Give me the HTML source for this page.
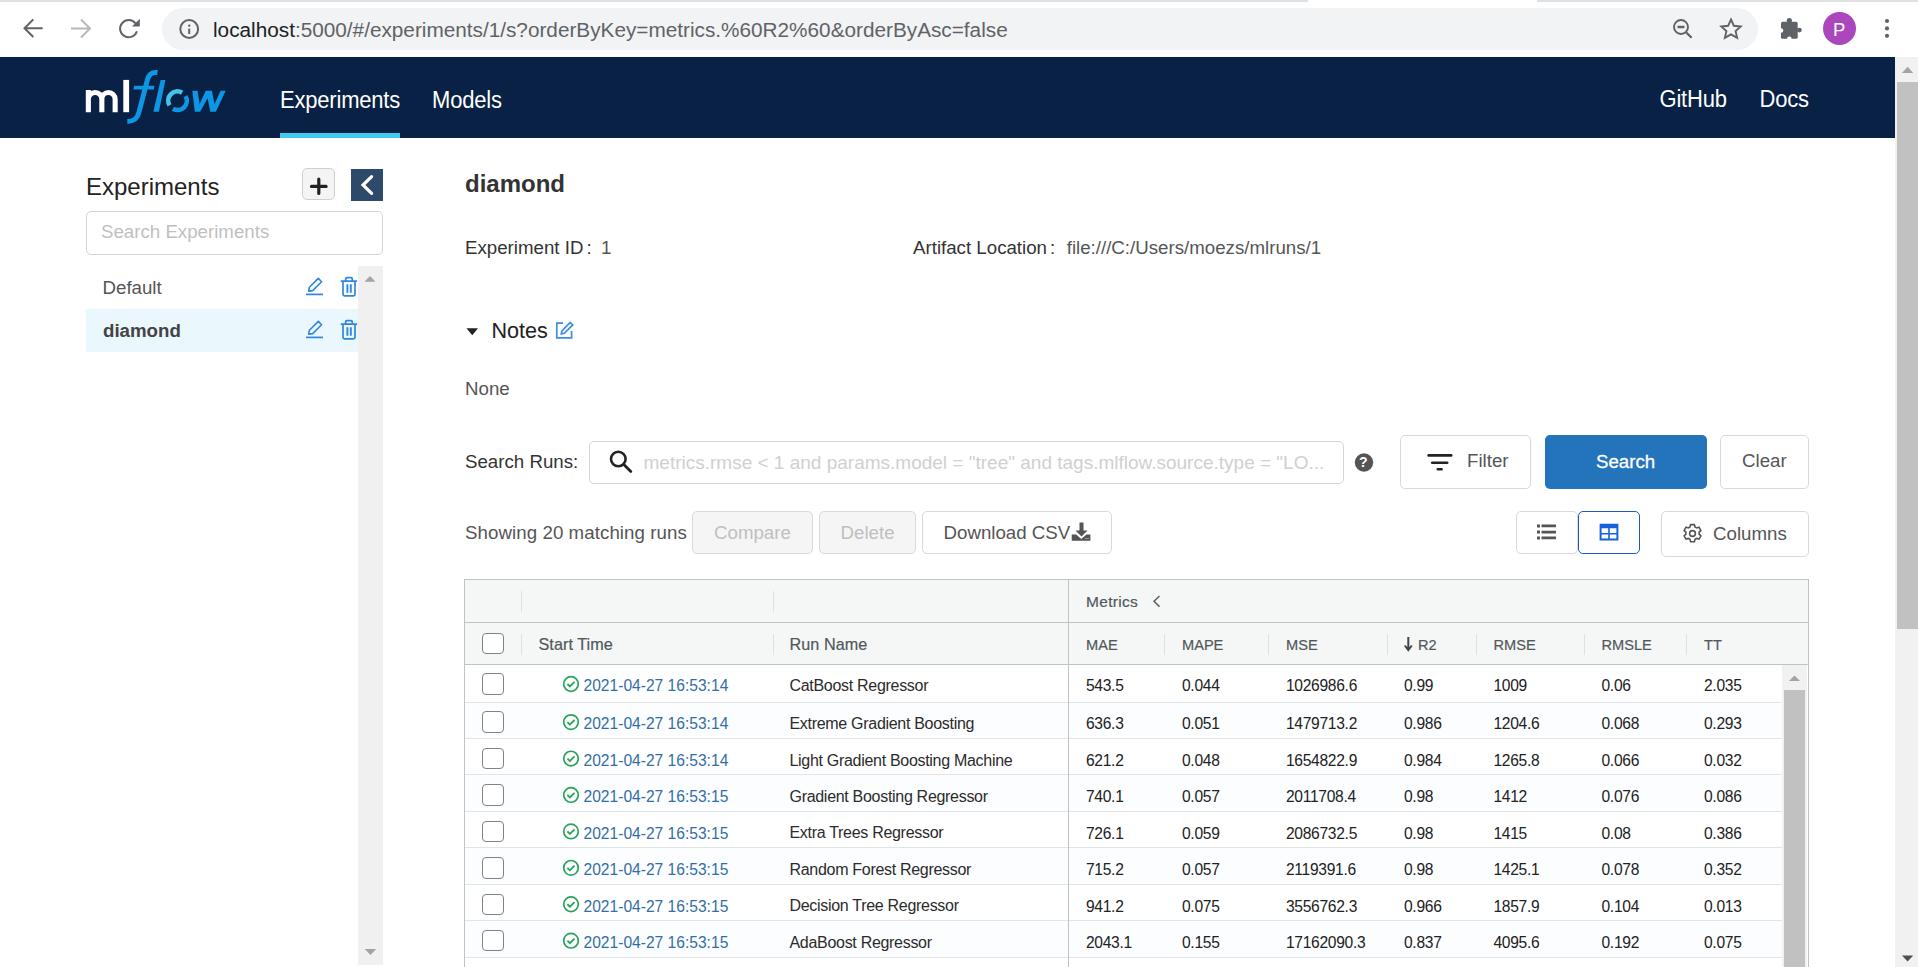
<!DOCTYPE html>
<html><head><meta charset="utf-8">
<style>
*{box-sizing:border-box;margin:0;padding:0}
html,body{width:1918px;height:967px;overflow:hidden;background:#fff;font-family:"Liberation Sans",sans-serif}
.a{position:absolute}
.t{position:absolute;white-space:pre;line-height:1}
svg{position:absolute;overflow:visible}
/* chrome */
#topstrip{left:0;top:0;width:1918px;height:2px;background:#dee1e6}
#omni{left:162px;top:8px;width:1596px;height:42px;border-radius:21px;background:#f1f3f4}
#nav{left:0;top:57px;width:1895px;height:81px;background:#082144}
.btn{position:absolute;border:1px solid #d9d9d9;border-radius:5px;background:#fff}
.gsep{position:absolute;width:1px;background:#dde2e6}
</style></head><body>
<div id="topstrip" class="a"></div>
<div class="a" style="left:1308px;top:0;width:229px;height:2px;background:#fff"></div>
<div id="omni" class="a"></div>

<!-- back -->
<svg style="left:0;top:0" width="1" height="1">
 <g fill="none" stroke="#5f6368" stroke-width="2">
  <path d="M42.6 28.2H25 M33.3 19.4l-8.8 8.8 8.8 8.8"/>
 </g>
 <g fill="none" stroke="#b6b8bb" stroke-width="2">
  <path d="M71 28.5h18 M81 19.5l9 9-9 9"/>
 </g>
 <path d="M136.9 31.2A8.6 8.6 0 1 1 135.5 23.4" fill="none" stroke="#5f6368" stroke-width="2"/>
 <path d="M139.8 18.8v7.8h-7.8z" fill="#5f6368"/>
 <circle cx="189.2" cy="29" r="8.9" fill="none" stroke="#5f6368" stroke-width="2"/>
 <rect x="188.2" y="28.6" width="2" height="5.4" fill="#5f6368"/>
 <circle cx="189.2" cy="25.6" r="1.2" fill="#5f6368"/>
 <!-- zoom -->
 <circle cx="1681" cy="27" r="7" fill="none" stroke="#5f6368" stroke-width="1.9"/>
 <path d="M1677.5 27h7 M1686 32.2l5.6 5.6" stroke="#5f6368" stroke-width="2.3" fill="none"/>
 <!-- star -->
 <path d="M1731 19.5l2.9 6.3 6.8.7-5.1 4.6 1.5 6.8-6.1-3.5-6.1 3.5 1.5-6.8-5.1-4.6 6.8-.7z" fill="none" stroke="#5f6368" stroke-width="1.9" stroke-linejoin="miter"/>
 <!-- puzzle -->
 <rect x="1781" y="21.8" width="16.7" height="17" rx="1.6" fill="#5f6368"/>
 <circle cx="1789.35" cy="20.5" r="2.6" fill="#5f6368"/>
 <circle cx="1799.4" cy="30.1" r="2.4" fill="#5f6368"/>
 <circle cx="1781" cy="30.5" r="2.3" fill="#fff"/>
 <circle cx="1789.35" cy="38.9" r="2.3" fill="#fff"/>
 <circle cx="1839.5" cy="28.4" r="16.5" fill="#ab47bc"/>
 <circle cx="1887" cy="21" r="2.1" fill="#5f6368"/>
 <circle cx="1887" cy="28.4" r="2.1" fill="#5f6368"/>
 <circle cx="1887" cy="35.8" r="2.1" fill="#5f6368"/>
</svg>
<div class="t" style="left:1833px;top:20.5px;font-size:18.5px;color:#fff">P</div>
<div class="t" style="left:213px;top:19.7px;font-size:20.75px;color:#5f6368"><span style="color:#202124">localhost</span>:5000/#/experiments/1/s?orderByKey=metrics.%60R2%60&amp;orderByAsc=false</div>

<!-- navbar -->
<div id="nav" class="a"></div>
<div class="a" style="left:280px;top:133px;width:120px;height:4.5px;background:#43c9ed"></div>
<div class="t" style="left:280px;top:88.6px;font-size:22px;letter-spacing:-.2px;color:#fff;transform:scaleY(1.07);transform-origin:0 0">Experiments</div>
<div class="t" style="left:432px;top:88.6px;font-size:22px;letter-spacing:-.2px;color:#fff;transform:scaleY(1.07);transform-origin:0 0">Models</div>
<div class="t" style="left:1659.5px;top:88.3px;font-size:22px;letter-spacing:-.2px;color:#fff;transform:scaleY(1.07);transform-origin:0 0">GitHub</div>
<div class="t" style="left:1759.5px;top:88.3px;font-size:22px;letter-spacing:-.2px;color:#fff;transform:scaleY(1.07);transform-origin:0 0">Docs</div>
<!-- logo -->
<svg style="left:0;top:0" width="1" height="1">
 <g fill="none" stroke="#fff" stroke-width="5.1">
  <path d="M88.35 112.2V90 M88.35 99.2a6.75 6.75 0 0 1 13.5 0V112.2 M101.85 99.2a6.65 6.65 0 0 1 13.3 0V112.2"/>
 </g>
 <rect x="123.3" y="79.9" width="5.8" height="32.3" fill="#fff"/>
 <path d="M157.5 72.6C151.5 71.8 148.6 74.5 147.2 80.5L139.2 111.5C137.6 118.5 134 121.3 127.3 121.6" fill="none" stroke="#0d96e4" stroke-width="5"/>
 <path d="M134.1 85.8h20.4l-.7 3.7h-20.4z" fill="#0d96e4"/>
 <path d="M160.6 79.9h4.8l-6.5 31.9h-5.5z" fill="#0d96e4"/>
 <path d="M169.5 105.3A9.2 9.2 0 0 1 182.1 92.7" fill="none" stroke="#45c2ea" stroke-width="4.6"/>
 <path d="M185.5 96.1A9.2 9.2 0 0 1 172.9 108.7" fill="none" stroke="#0d96e4" stroke-width="4.6"/>
 <path d="M192.3 90.8L197.6 90.8L199.6 104L205.7 90.8L211.9 90.8L214.5 104L220.6 90.8L225.7 90.8L215.9 111.7L210.3 111.7L207.6 98.3L200.1 111.7L194.8 111.7z" fill="#0d96e4"/>
</svg>

<!-- page scrollbar -->
<div class="a" style="left:1895px;top:57px;width:23px;height:910px;background:#f1f1f1"></div>
<div class="a" style="left:1897px;top:82px;width:21px;height:547px;background:#c1c1c1"></div>
<svg style="left:0;top:0" width="1" height="1">
 <path d="M1902 73h11.2l-5.6-6.3z" fill="#a3a3a3"/>
 <path d="M1902 955.5h11.2l-5.6 6z" fill="#505050"/>
</svg>

<!-- SIDEBAR -->
<div class="t" style="left:86px;top:175px;font-size:24px;color:#222">Experiments</div>
<div class="a" style="left:302px;top:168px;width:33px;height:32px;border:1px solid #cfcfcf;border-radius:5px;background:#f4f4f4"></div>
<svg style="left:0;top:0" width="1" height="1"><path d="M318.8 179.2v14.2 M311.5 186.4h14.6" stroke="#222" stroke-width="3.2" stroke-linecap="round"/></svg>
<div class="a" style="left:351px;top:169px;width:32px;height:32px;background:#2e4a6b"></div>
<svg style="left:0;top:0" width="1" height="1"><path d="M371.6 176.6l-8.6 8.4 8.6 8.4" stroke="#fff" stroke-width="3.2" fill="none" stroke-linecap="round"/></svg>
<div class="a" style="left:86px;top:211px;width:297px;height:44px;border:1px solid #d4d4d4;border-radius:5px"></div>
<div class="t" style="left:101px;top:223px;font-size:18.7px;color:#bfbfbf">Search Experiments</div>
<div class="a" style="left:86px;top:309px;width:272px;height:43px;background:#eaf7fd"></div>
<div class="a" style="left:358px;top:266px;width:25px;height:699px;background:#f0f0f0"></div>
<svg style="left:0;top:0" width="1" height="1">
 <path d="M364.5 281.8h11l-5.5-5.8z" fill="#a3a3a3"/>
 <path d="M364.8 949h11.4l-5.7 6z" fill="#a3a3a3"/>
</svg>
<div class="t" style="left:102.5px;top:278.8px;font-size:18.7px;color:#555">Default</div>
<div class="t" style="left:103px;top:321.8px;font-size:18.7px;color:#444;font-weight:bold">diamond</div>
<svg style="left:0;top:0" width="1" height="1">
 <g fill="none" stroke="#2f86e0" stroke-width="1.7">
  <path d="M306 294.4h17"/>
  <path d="M308.6 291.1l.8-3.8 8.9-8.9 3.3 3.3-8.9 8.9z" stroke-width="1.6" stroke-linejoin="round"/>
  <path d="M340.7 281.2h16.4 M345.6 280.8v-1.9a1.3 1.3 0 0 1 1.3-1.3h4.1a1.3 1.3 0 0 1 1.3 1.3v1.9 M343 281.5v12.7a1.6 1.6 0 0 0 1.6 1.6h8.8a1.6 1.6 0 0 0 1.6-1.6v-12.7"/>
  <path d="M347.4 284.3v8.4 M350.8 284.3v8.4" stroke-width="1.9"/>
 </g>
 <g fill="none" stroke="#2f86e0" stroke-width="1.7">
  <path d="M306 337.4h17"/>
  <path d="M308.6 334.1l.8-3.8 8.9-8.9 3.3 3.3-8.9 8.9z" stroke-width="1.6" stroke-linejoin="round"/>
  <path d="M340.7 324.2h16.4 M345.6 323.8v-1.9a1.3 1.3 0 0 1 1.3-1.3h4.1a1.3 1.3 0 0 1 1.3 1.3v1.9 M343 324.5v12.7a1.6 1.6 0 0 0 1.6 1.6h8.8a1.6 1.6 0 0 0 1.6-1.6v-12.7"/>
  <path d="M347.4 327.3v8.4 M350.8 327.3v8.4" stroke-width="1.9"/>
 </g>
</svg>

<!-- MAIN -->
<div class="t" style="left:465px;top:172px;font-size:24px;color:#333;font-weight:bold">diamond</div>
<div class="t" style="left:465px;top:238.8px;font-size:18.7px;color:#333">Experiment ID<span style="margin:0 9.5px 0 3px">:</span><span style="color:#555">1</span></div>
<div class="t" style="left:913px;top:238.8px;font-size:18.7px;color:#333">Artifact Location<span style="margin:0 11.5px 0 3px">:</span><span style="color:#555">file:///C:/Users/moezs/mlruns/1</span></div>
<svg style="left:0;top:0" width="1" height="1"><path d="M466.5 328.2h11.5l-5.75 7z" fill="#222"/></svg>
<div class="t" style="left:491.5px;top:319.5px;font-size:21.6px;color:#222">Notes</div>
<svg style="left:0;top:0" width="1" height="1"><g fill="none" stroke="#3a8ee6" stroke-width="1.7"><path d="M563 323.2h-6.2v14.6h14.8v-6.8 M570.3 322.5l2.4 2.4-8.4 8.4-3 .6.6-3z"/></g></svg>
<div class="t" style="left:465px;top:379.5px;font-size:18.7px;color:#555">None</div>

<div class="t" style="left:465px;top:453px;font-size:18.7px;color:#333">Search Runs:</div>
<div class="a" style="left:589px;top:441px;width:755px;height:43px;border:1px solid #d4d4d4;border-radius:5px"></div>
<svg style="left:0;top:0" width="1" height="1"><circle cx="618.3" cy="459" r="7.3" fill="none" stroke="#222" stroke-width="2.6"/><path d="M623.8 464.5l7 7" stroke="#222" stroke-width="2.8" stroke-linecap="round"/></svg>
<div class="t" style="left:643.5px;top:452.5px;font-size:19px;color:#d0d0d0">metrics.rmse &lt; 1 and params.model = "tree" and tags.mlflow.source.type = "LO...</div>
<svg style="left:0;top:0" width="1" height="1"><circle cx="1364" cy="462.5" r="9.2" fill="#555"/></svg>
<div class="t" style="left:1359px;top:455px;font-size:14px;color:#fff;font-weight:bold">?</div>
<div class="btn" style="left:1400px;top:435px;width:131px;height:54px"></div>
<svg style="left:0;top:0" width="1" height="1"><path d="M1428.6 455.4h22.6 M1432.2 462.7h15 M1437.8 469.2h3.8" stroke="#222" stroke-width="2.6" stroke-linecap="round"/></svg>
<div class="t" style="left:1467px;top:452.3px;font-size:18.7px;color:#555">Filter</div>
<div class="a" style="left:1545px;top:435px;width:162px;height:54px;background:#2374bb;border-radius:5px"></div>
<div class="t" style="left:1596px;top:452.7px;font-size:18.7px;color:#fff;-webkit-text-stroke:.3px #fff">Search</div>
<div class="btn" style="left:1720px;top:435px;width:89px;height:54px"></div>
<div class="t" style="left:1742px;top:452px;font-size:18.7px;color:#555">Clear</div>

<div class="t" style="left:465px;top:523.8px;font-size:18.7px;color:#555;letter-spacing:.07px">Showing 20 matching runs</div>
<div class="btn" style="left:692px;top:511px;width:121px;height:43px;background:#f5f5f5"></div>
<div class="t" style="left:714px;top:523.7px;font-size:18.7px;color:#bfbfbf">Compare</div>
<div class="btn" style="left:819px;top:511px;width:97px;height:43px;background:#f5f5f5"></div>
<div class="t" style="left:840.5px;top:523.7px;font-size:18.7px;color:#bfbfbf">Delete</div>
<div class="btn" style="left:922px;top:511px;width:190px;height:43px"></div>
<div class="t" style="left:943.5px;top:523.7px;font-size:18.7px;color:#555">Download CSV</div>
<svg style="left:0;top:0" width="1" height="1"><path d="M1079.5 522.4h4v8h4l-6 6.2-6-6.2h4z M1071.7 534.5h4.5l5.1 4.6 5.1-4.6h4v6.2h-18.7z" fill="#555"/><circle cx="1086" cy="538.5" r=".5" fill="#fff"/><circle cx="1088" cy="538.5" r=".5" fill="#fff"/></svg>

<div class="btn" style="left:1516px;top:511px;width:62px;height:43px"></div>
<div class="btn" style="left:1578px;top:511px;width:62px;height:43px;border-color:#1a5cbd"></div>
<svg style="left:0;top:0" width="1" height="1">
 <path d="M1537 524.5h3v3h-3z M1537 530.6h3v3h-3z M1537 536.5h3v3h-3z M1541.5 524.6h14.5v2.7h-14.5z M1541.5 530.7h14.5v2.7h-14.5z M1541.5 536.6h14.5v2.7h-14.5z" fill="#555"/>
 <path fill-rule="evenodd" d="M1599.6 523.8h18.8v16.8h-18.8z M1601.6 528.3h6.6v4.6h-6.6z M1609.8 528.3h6.6v4.6h-6.6z M1601.6 534.5h6.6v4.1h-6.6z M1609.8 534.5h6.6v4.1h-6.6z" fill="#1565d8"/>
</svg>
<div class="btn" style="left:1661px;top:511px;width:148px;height:46px"></div>
<svg style="left:0;top:0" width="1" height="1"><g fill="none" stroke="#555" stroke-width="1.6"><circle cx="1692.5" cy="533.5" r="2.9"/><path d="M1690.6 524.6h3.8l.6 2.4 1.6.9 2.4-.7 1.9 3.3-1.8 1.7v1.9l1.8 1.7-1.9 3.3-2.4-.7-1.6.9-.6 2.4h-3.8l-.6-2.4-1.6-.9-2.4.7-1.9-3.3 1.8-1.7v-1.9l-1.8-1.7 1.9-3.3 2.4.7 1.6-.9z"/></g></svg>
<div class="t" style="left:1713px;top:524.5px;font-size:18.7px;color:#555">Columns</div>

<!-- TABLE -->
<div class="a" style="left:464px;top:579px;width:1345px;height:400px;border:1px solid #bdc3c7;background:#fff"></div>
<div class="a" style="left:465px;top:580px;width:1343px;height:84px;background:#f5f7f7"></div>
<div class="a" style="left:465px;top:622px;width:1343px;height:1px;background:#bdc3c7"></div>
<div class="a" style="left:465px;top:664px;width:1343px;height:1px;background:#bdc3c7"></div>
<div class="a" style="left:465px;top:665.00px;width:1317px;height:36.55px;background:#fff"></div>
<div class="a" style="left:465px;top:701.55px;width:1317px;height:1px;background:#e2e5e8"></div>
<div class="a" style="left:482px;top:673.25px;width:22px;height:21.5px;border:1.7px solid #7d8488;border-radius:4px;background:#fff"></div>
<svg style="left:0;top:0" width="1" height="1"><circle cx="571" cy="684.00" r="7.3" fill="none" stroke="#2aa35a" stroke-width="1.7"/><path d="M567.4 684.00l2.5 2.5 4.6-4.6" fill="none" stroke="#2aa35a" stroke-width="1.8"/></svg>
<div class="t" style="left:583.5px;top:678.28px;font-size:15.6px;color:#336ea6;letter-spacing:0">2021-04-27 16:53:14</div>
<div class="t" style="left:789.5px;top:678.10px;font-size:16px;color:#2b2b2b;letter-spacing:-.3px">CatBoost Regressor</div>
<div class="t" style="left:1086px;top:678.28px;font-size:15.6px;color:#222;letter-spacing:-.3px">543.5</div>
<div class="t" style="left:1182px;top:678.28px;font-size:15.6px;color:#222;letter-spacing:-.3px">0.044</div>
<div class="t" style="left:1286px;top:678.28px;font-size:15.6px;color:#222;letter-spacing:-.3px">1026986.6</div>
<div class="t" style="left:1404px;top:678.28px;font-size:15.6px;color:#222;letter-spacing:-.3px">0.99</div>
<div class="t" style="left:1493.5px;top:678.28px;font-size:15.6px;color:#222;letter-spacing:-.3px">1009</div>
<div class="t" style="left:1601.5px;top:678.28px;font-size:15.6px;color:#222;letter-spacing:-.3px">0.06</div>
<div class="t" style="left:1704px;top:678.28px;font-size:15.6px;color:#222;letter-spacing:-.3px">2.035</div>
<div class="a" style="left:465px;top:702.50px;width:1317px;height:35.48px;background:#fcfdfe"></div>
<div class="a" style="left:465px;top:737.98px;width:1317px;height:1px;background:#e2e5e8"></div>
<div class="a" style="left:482px;top:711.35px;width:22px;height:21.5px;border:1.7px solid #7d8488;border-radius:4px;background:#fff"></div>
<svg style="left:0;top:0" width="1" height="1"><circle cx="571" cy="722.10" r="7.3" fill="none" stroke="#2aa35a" stroke-width="1.7"/><path d="M567.4 722.10l2.5 2.5 4.6-4.6" fill="none" stroke="#2aa35a" stroke-width="1.8"/></svg>
<div class="t" style="left:583.5px;top:716.38px;font-size:15.6px;color:#336ea6;letter-spacing:0">2021-04-27 16:53:14</div>
<div class="t" style="left:789.5px;top:716.20px;font-size:16px;color:#2b2b2b;letter-spacing:-.3px">Extreme Gradient Boosting</div>
<div class="t" style="left:1086px;top:716.38px;font-size:15.6px;color:#222;letter-spacing:-.3px">636.3</div>
<div class="t" style="left:1182px;top:716.38px;font-size:15.6px;color:#222;letter-spacing:-.3px">0.051</div>
<div class="t" style="left:1286px;top:716.38px;font-size:15.6px;color:#222;letter-spacing:-.3px">1479713.2</div>
<div class="t" style="left:1404px;top:716.38px;font-size:15.6px;color:#222;letter-spacing:-.3px">0.986</div>
<div class="t" style="left:1493.5px;top:716.38px;font-size:15.6px;color:#222;letter-spacing:-.3px">1204.6</div>
<div class="t" style="left:1601.5px;top:716.38px;font-size:15.6px;color:#222;letter-spacing:-.3px">0.068</div>
<div class="t" style="left:1704px;top:716.38px;font-size:15.6px;color:#222;letter-spacing:-.3px">0.293</div>
<div class="a" style="left:465px;top:738.93px;width:1317px;height:35.48px;background:#fff"></div>
<div class="a" style="left:465px;top:774.41px;width:1317px;height:1px;background:#e2e5e8"></div>
<div class="a" style="left:482px;top:747.78px;width:22px;height:21.5px;border:1.7px solid #7d8488;border-radius:4px;background:#fff"></div>
<svg style="left:0;top:0" width="1" height="1"><circle cx="571" cy="758.53" r="7.3" fill="none" stroke="#2aa35a" stroke-width="1.7"/><path d="M567.4 758.53l2.5 2.5 4.6-4.6" fill="none" stroke="#2aa35a" stroke-width="1.8"/></svg>
<div class="t" style="left:583.5px;top:752.81px;font-size:15.6px;color:#336ea6;letter-spacing:0">2021-04-27 16:53:14</div>
<div class="t" style="left:789.5px;top:752.63px;font-size:16px;color:#2b2b2b;letter-spacing:-.3px">Light Gradient Boosting Machine</div>
<div class="t" style="left:1086px;top:752.81px;font-size:15.6px;color:#222;letter-spacing:-.3px">621.2</div>
<div class="t" style="left:1182px;top:752.81px;font-size:15.6px;color:#222;letter-spacing:-.3px">0.048</div>
<div class="t" style="left:1286px;top:752.81px;font-size:15.6px;color:#222;letter-spacing:-.3px">1654822.9</div>
<div class="t" style="left:1404px;top:752.81px;font-size:15.6px;color:#222;letter-spacing:-.3px">0.984</div>
<div class="t" style="left:1493.5px;top:752.81px;font-size:15.6px;color:#222;letter-spacing:-.3px">1265.8</div>
<div class="t" style="left:1601.5px;top:752.81px;font-size:15.6px;color:#222;letter-spacing:-.3px">0.066</div>
<div class="t" style="left:1704px;top:752.81px;font-size:15.6px;color:#222;letter-spacing:-.3px">0.032</div>
<div class="a" style="left:465px;top:775.36px;width:1317px;height:35.48px;background:#fcfdfe"></div>
<div class="a" style="left:465px;top:810.84px;width:1317px;height:1px;background:#e2e5e8"></div>
<div class="a" style="left:482px;top:784.21px;width:22px;height:21.5px;border:1.7px solid #7d8488;border-radius:4px;background:#fff"></div>
<svg style="left:0;top:0" width="1" height="1"><circle cx="571" cy="794.96" r="7.3" fill="none" stroke="#2aa35a" stroke-width="1.7"/><path d="M567.4 794.96l2.5 2.5 4.6-4.6" fill="none" stroke="#2aa35a" stroke-width="1.8"/></svg>
<div class="t" style="left:583.5px;top:789.24px;font-size:15.6px;color:#336ea6;letter-spacing:0">2021-04-27 16:53:15</div>
<div class="t" style="left:789.5px;top:789.06px;font-size:16px;color:#2b2b2b;letter-spacing:-.3px">Gradient Boosting Regressor</div>
<div class="t" style="left:1086px;top:789.24px;font-size:15.6px;color:#222;letter-spacing:-.3px">740.1</div>
<div class="t" style="left:1182px;top:789.24px;font-size:15.6px;color:#222;letter-spacing:-.3px">0.057</div>
<div class="t" style="left:1286px;top:789.24px;font-size:15.6px;color:#222;letter-spacing:-.3px">2011708.4</div>
<div class="t" style="left:1404px;top:789.24px;font-size:15.6px;color:#222;letter-spacing:-.3px">0.98</div>
<div class="t" style="left:1493.5px;top:789.24px;font-size:15.6px;color:#222;letter-spacing:-.3px">1412</div>
<div class="t" style="left:1601.5px;top:789.24px;font-size:15.6px;color:#222;letter-spacing:-.3px">0.076</div>
<div class="t" style="left:1704px;top:789.24px;font-size:15.6px;color:#222;letter-spacing:-.3px">0.086</div>
<div class="a" style="left:465px;top:811.79px;width:1317px;height:35.48px;background:#fff"></div>
<div class="a" style="left:465px;top:847.27px;width:1317px;height:1px;background:#e2e5e8"></div>
<div class="a" style="left:482px;top:820.64px;width:22px;height:21.5px;border:1.7px solid #7d8488;border-radius:4px;background:#fff"></div>
<svg style="left:0;top:0" width="1" height="1"><circle cx="571" cy="831.39" r="7.3" fill="none" stroke="#2aa35a" stroke-width="1.7"/><path d="M567.4 831.39l2.5 2.5 4.6-4.6" fill="none" stroke="#2aa35a" stroke-width="1.8"/></svg>
<div class="t" style="left:583.5px;top:825.67px;font-size:15.6px;color:#336ea6;letter-spacing:0">2021-04-27 16:53:15</div>
<div class="t" style="left:789.5px;top:825.49px;font-size:16px;color:#2b2b2b;letter-spacing:-.3px">Extra Trees Regressor</div>
<div class="t" style="left:1086px;top:825.67px;font-size:15.6px;color:#222;letter-spacing:-.3px">726.1</div>
<div class="t" style="left:1182px;top:825.67px;font-size:15.6px;color:#222;letter-spacing:-.3px">0.059</div>
<div class="t" style="left:1286px;top:825.67px;font-size:15.6px;color:#222;letter-spacing:-.3px">2086732.5</div>
<div class="t" style="left:1404px;top:825.67px;font-size:15.6px;color:#222;letter-spacing:-.3px">0.98</div>
<div class="t" style="left:1493.5px;top:825.67px;font-size:15.6px;color:#222;letter-spacing:-.3px">1415</div>
<div class="t" style="left:1601.5px;top:825.67px;font-size:15.6px;color:#222;letter-spacing:-.3px">0.08</div>
<div class="t" style="left:1704px;top:825.67px;font-size:15.6px;color:#222;letter-spacing:-.3px">0.386</div>
<div class="a" style="left:465px;top:848.22px;width:1317px;height:35.48px;background:#fcfdfe"></div>
<div class="a" style="left:465px;top:883.70px;width:1317px;height:1px;background:#e2e5e8"></div>
<div class="a" style="left:482px;top:857.07px;width:22px;height:21.5px;border:1.7px solid #7d8488;border-radius:4px;background:#fff"></div>
<svg style="left:0;top:0" width="1" height="1"><circle cx="571" cy="867.82" r="7.3" fill="none" stroke="#2aa35a" stroke-width="1.7"/><path d="M567.4 867.82l2.5 2.5 4.6-4.6" fill="none" stroke="#2aa35a" stroke-width="1.8"/></svg>
<div class="t" style="left:583.5px;top:862.10px;font-size:15.6px;color:#336ea6;letter-spacing:0">2021-04-27 16:53:15</div>
<div class="t" style="left:789.5px;top:861.92px;font-size:16px;color:#2b2b2b;letter-spacing:-.3px">Random Forest Regressor</div>
<div class="t" style="left:1086px;top:862.10px;font-size:15.6px;color:#222;letter-spacing:-.3px">715.2</div>
<div class="t" style="left:1182px;top:862.10px;font-size:15.6px;color:#222;letter-spacing:-.3px">0.057</div>
<div class="t" style="left:1286px;top:862.10px;font-size:15.6px;color:#222;letter-spacing:-.3px">2119391.6</div>
<div class="t" style="left:1404px;top:862.10px;font-size:15.6px;color:#222;letter-spacing:-.3px">0.98</div>
<div class="t" style="left:1493.5px;top:862.10px;font-size:15.6px;color:#222;letter-spacing:-.3px">1425.1</div>
<div class="t" style="left:1601.5px;top:862.10px;font-size:15.6px;color:#222;letter-spacing:-.3px">0.078</div>
<div class="t" style="left:1704px;top:862.10px;font-size:15.6px;color:#222;letter-spacing:-.3px">0.352</div>
<div class="a" style="left:465px;top:884.65px;width:1317px;height:35.48px;background:#fff"></div>
<div class="a" style="left:465px;top:920.13px;width:1317px;height:1px;background:#e2e5e8"></div>
<div class="a" style="left:482px;top:893.50px;width:22px;height:21.5px;border:1.7px solid #7d8488;border-radius:4px;background:#fff"></div>
<svg style="left:0;top:0" width="1" height="1"><circle cx="571" cy="904.25" r="7.3" fill="none" stroke="#2aa35a" stroke-width="1.7"/><path d="M567.4 904.25l2.5 2.5 4.6-4.6" fill="none" stroke="#2aa35a" stroke-width="1.8"/></svg>
<div class="t" style="left:583.5px;top:898.53px;font-size:15.6px;color:#336ea6;letter-spacing:0">2021-04-27 16:53:15</div>
<div class="t" style="left:789.5px;top:898.35px;font-size:16px;color:#2b2b2b;letter-spacing:-.3px">Decision Tree Regressor</div>
<div class="t" style="left:1086px;top:898.53px;font-size:15.6px;color:#222;letter-spacing:-.3px">941.2</div>
<div class="t" style="left:1182px;top:898.53px;font-size:15.6px;color:#222;letter-spacing:-.3px">0.075</div>
<div class="t" style="left:1286px;top:898.53px;font-size:15.6px;color:#222;letter-spacing:-.3px">3556762.3</div>
<div class="t" style="left:1404px;top:898.53px;font-size:15.6px;color:#222;letter-spacing:-.3px">0.966</div>
<div class="t" style="left:1493.5px;top:898.53px;font-size:15.6px;color:#222;letter-spacing:-.3px">1857.9</div>
<div class="t" style="left:1601.5px;top:898.53px;font-size:15.6px;color:#222;letter-spacing:-.3px">0.104</div>
<div class="t" style="left:1704px;top:898.53px;font-size:15.6px;color:#222;letter-spacing:-.3px">0.013</div>
<div class="a" style="left:465px;top:921.08px;width:1317px;height:35.48px;background:#fcfdfe"></div>
<div class="a" style="left:465px;top:956.56px;width:1317px;height:1px;background:#e2e5e8"></div>
<div class="a" style="left:482px;top:929.93px;width:22px;height:21.5px;border:1.7px solid #7d8488;border-radius:4px;background:#fff"></div>
<svg style="left:0;top:0" width="1" height="1"><circle cx="571" cy="940.68" r="7.3" fill="none" stroke="#2aa35a" stroke-width="1.7"/><path d="M567.4 940.68l2.5 2.5 4.6-4.6" fill="none" stroke="#2aa35a" stroke-width="1.8"/></svg>
<div class="t" style="left:583.5px;top:934.96px;font-size:15.6px;color:#336ea6;letter-spacing:0">2021-04-27 16:53:15</div>
<div class="t" style="left:789.5px;top:934.78px;font-size:16px;color:#2b2b2b;letter-spacing:-.3px">AdaBoost Regressor</div>
<div class="t" style="left:1086px;top:934.96px;font-size:15.6px;color:#222;letter-spacing:-.3px">2043.1</div>
<div class="t" style="left:1182px;top:934.96px;font-size:15.6px;color:#222;letter-spacing:-.3px">0.155</div>
<div class="t" style="left:1286px;top:934.96px;font-size:15.6px;color:#222;letter-spacing:-.3px">17162090.3</div>
<div class="t" style="left:1404px;top:934.96px;font-size:15.6px;color:#222;letter-spacing:-.3px">0.837</div>
<div class="t" style="left:1493.5px;top:934.96px;font-size:15.6px;color:#222;letter-spacing:-.3px">4095.6</div>
<div class="t" style="left:1601.5px;top:934.96px;font-size:15.6px;color:#222;letter-spacing:-.3px">0.192</div>
<div class="t" style="left:1704px;top:934.96px;font-size:15.6px;color:#222;letter-spacing:-.3px">0.075</div>
<div class="a" style="left:1068px;top:580px;width:1px;height:387px;background:#bdc3c7"></div>
<div class="gsep" style="left:521px;top:591px;height:20.5px"></div>
<div class="gsep" style="left:773px;top:591px;height:20.5px"></div>
<div class="gsep" style="left:521px;top:634px;height:20.5px"></div>
<div class="gsep" style="left:773px;top:634px;height:20.5px"></div>
<div class="gsep" style="left:1164px;top:634px;height:20.5px"></div>
<div class="gsep" style="left:1268px;top:634px;height:20.5px"></div>
<div class="gsep" style="left:1387px;top:634px;height:20.5px"></div>
<div class="gsep" style="left:1476px;top:634px;height:20.5px"></div>
<div class="gsep" style="left:1584px;top:634px;height:20.5px"></div>
<div class="gsep" style="left:1686px;top:634px;height:20.5px"></div>
<div class="a" style="left:482px;top:632.8px;width:22px;height:21.5px;border:1.7px solid #7d8488;border-radius:4px;background:#fff"></div>
<div class="t" style="left:538.5px;top:636.3px;font-size:16.2px;color:#52575c;letter-spacing:.05px;-webkit-text-stroke:.2px #52575c">Start Time</div>
<div class="t" style="left:789.5px;top:636.3px;font-size:16.2px;color:#52575c;letter-spacing:.05px;-webkit-text-stroke:.2px #52575c">Run Name</div>
<div class="t" style="left:1086px;top:637.6px;font-size:14.6px;color:#52575c;letter-spacing:0;-webkit-text-stroke:.2px #52575c">MAE</div>
<div class="t" style="left:1182px;top:637.6px;font-size:14.6px;color:#52575c;letter-spacing:0;-webkit-text-stroke:.2px #52575c">MAPE</div>
<div class="t" style="left:1286px;top:637.6px;font-size:14.6px;color:#52575c;letter-spacing:0;-webkit-text-stroke:.2px #52575c">MSE</div>
<div class="t" style="left:1418px;top:637.6px;font-size:14.6px;color:#52575c;letter-spacing:0;-webkit-text-stroke:.2px #52575c">R2</div>
<div class="t" style="left:1493.5px;top:637.6px;font-size:14.6px;color:#52575c;letter-spacing:0;-webkit-text-stroke:.2px #52575c">RMSE</div>
<div class="t" style="left:1601.5px;top:637.6px;font-size:14.6px;color:#52575c;letter-spacing:0;-webkit-text-stroke:.2px #52575c">RMSLE</div>
<div class="t" style="left:1704px;top:637.6px;font-size:14.6px;color:#52575c;letter-spacing:0;-webkit-text-stroke:.2px #52575c">TT</div>
<div class="t" style="left:1086px;top:593.9px;font-size:15.5px;color:#52575c;letter-spacing:.3px;-webkit-text-stroke:.2px #52575c">Metrics</div>
<svg style="left:0;top:0" width="1" height="1"><path d="M1159.5 596l-5.5 5.3 5.5 5.3" fill="none" stroke="#5a5f63" stroke-width="1.5"/><path d="M1408.3 637v12 M1404.8 645.5l3.5 4.5 3.5-4.5" fill="none" stroke="#444" stroke-width="2"/></svg>
<div class="a" style="left:1782px;top:665px;width:25px;height:302px;background:#f1f1f1"></div>
<div class="a" style="left:1784px;top:690px;width:21px;height:277px;background:#c1c1c1"></div>
<svg style="left:0;top:0" width="1" height="1"><path d="M1789 681h11l-5.5-5.5z" fill="#a3a3a3"/></svg>
</body></html>
